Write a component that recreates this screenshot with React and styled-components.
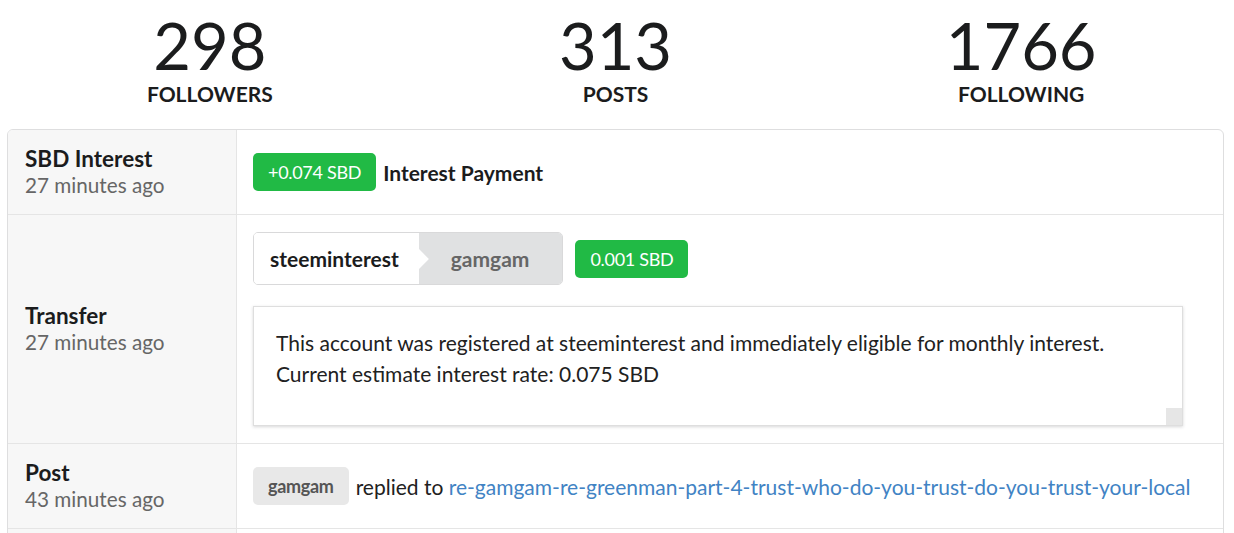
import React from "react";
import styled, { createGlobalStyle } from "styled-components";

const GlobalStyle = createGlobalStyle`
  body {
    margin: 0;
    background: #fff;
    font-family: Lato, "Open Sans", sans-serif;
    color: #212121;
  }
`;

const stats = [
  { value: 298, label: "Followers" },
  { value: 313, label: "Posts" },
  { value: 1766, label: "Following" },
];

const App = () => {
  return (
    <Page>
      <GlobalStyle />
      <Stats>
        {stats.map((s) => (
          <Stat key={s.label}>
            <StatValue>{s.value}</StatValue>
            <StatLabel>{s.label}</StatLabel>
          </Stat>
        ))}
      </Stats>
      <Table>
        <Row>
          <Head>
            <Title>SBD Interest</Title>
            <Meta>27 minutes ago</Meta>
          </Head>
          <Body>
            <Inline>
              <Label $green>+0.074 SBD</Label>
              <Strong>Interest Payment</Strong>
            </Inline>
          </Body>
        </Row>
        <Row>
          <Head>
            <Title>Transfer</Title>
            <Meta>27 minutes ago</Meta>
          </Head>
          <Body>
            <Inline $gap="12px">
              <Steps>
                <Step $from>steeminterest</Step>
                <Step>gamgam</Step>
              </Steps>
              <Label $green>0.001 SBD</Label>
            </Inline>
            <Segment>
              <Memo>
                This account was registered at steeminterest and immediately eligible for monthly interest.
                <br />
                Current estimate interest rate: 0.075 SBD
              </Memo>
              <Corner />
            </Segment>
          </Body>
        </Row>
        <Row>
          <Head>
            <Title>Post</Title>
            <Meta>43 minutes ago</Meta>
          </Head>
          <Body>
            <Inline $gap="7px">
              <Label>gamgam</Label>
              <Text>
                replied to{" "}
                <Link href="#">re-gamgam-re-greenman-part-4-trust-who-do-you-trust-do-you-trust-your-local</Link>
              </Text>
            </Inline>
          </Body>
        </Row>
        <Row>
          <Head />
          <Body />
        </Row>
      </Table>
    </Page>
  );
};

export default App;

const Page = styled.div`
  width: 1217px;
  margin-left: 7px;
`;

const Stats = styled.div`
  display: grid;
  grid-template-columns: repeat(3, 1fr);
  padding: 13px 0 23px;
`;

const Stat = styled.div`
  display: flex;
  flex-direction: column;
  align-items: center;
`;

const StatValue = styled.div`
  font-size: 65px;
  line-height: 1;
  font-weight: 400;
  color: #1b1c1d;
`;

const StatLabel = styled.div`
  font-size: 21px;
  line-height: 25px;
  font-weight: 700;
  text-transform: uppercase;
  color: #1b1c1d;
  margin-top: 3px;
`;

const Table = styled.div`
  border: 1px solid #dededf;
  border-radius: 6px;
  overflow: hidden;
`;

const Row = styled.div`
  display: grid;
  grid-template-columns: 229px 1fr;
  & + & {
    border-top: 1px solid #e5e5e5;
  }
`;

const Head = styled.div`
  background: #f7f7f7;
  border-right: 1px solid #e5e5e5;
  padding: 16px 17px;
  display: flex;
  flex-direction: column;
  justify-content: center;
  min-height: 52px;
`;

const Title = styled.div`
  font-size: 22.5px;
  font-weight: 700;
  line-height: 26px;
  color: #1b1c1d;
`;

const Meta = styled.div`
  font-size: 20.7px;
  line-height: 26px;
  color: #666;
`;

const Body = styled.div`
  padding: 17px 16px;
  display: flex;
  flex-direction: column;
  justify-content: center;
  gap: 21px;
`;

const Inline = styled.div`
  display: flex;
  align-items: center;
  gap: ${(p) => p.$gap || "7px"};
`;

const Label = styled.span`
  display: inline-flex;
  align-items: center;
  height: 38px;
  padding: 0 15px;
  border-radius: 5px;
  font-size: 18px;
  font-weight: ${(p) => (p.$green ? 400 : 700)};
  background: ${(p) => (p.$green ? "#21ba45" : "#e8e8e8")};
  color: ${(p) => (p.$green ? "#fff" : "#555")};
  letter-spacing: -0.3px;
`;

const Strong = styled.span`
  font-size: 21px;
  font-weight: 700;
  color: #1b1c1d;
`;

const Text = styled.span`
  font-size: 21px;
  color: #212121;
`;

const Link = styled.a`
  color: #4183c4;
  text-decoration: none;
`;

const Steps = styled.div`
  display: flex;
  height: 51px;
  border: 1px solid #d9d9da;
  border-radius: 5px;
  overflow: hidden;
`;

const Step = styled.div`
  position: relative;
  display: flex;
  align-items: center;
  font-size: 21px;
  font-weight: 700;
  padding: ${(p) => (p.$from ? "0 20px 0 16px" : "0 33px 0 32px")};
  background: ${(p) => (p.$from ? "#fff" : "#e0e1e2")};
  color: ${(p) => (p.$from ? "#1b1c1d" : "#666")};
  ${(p) =>
    p.$from &&
    `
    &::after {
      content: "";
      position: absolute;
      right: -7px;
      top: 50%;
      width: 14px;
      height: 14px;
      background: #fff;
      transform: translateY(-50%) rotate(45deg);
      z-index: 1;
    }
  `}
`;

const Segment = styled.div`
  width: 928px;
  height: 118px;
  border: 1px solid #dedede;
  box-shadow: 0 1px 3px rgba(34, 36, 38, 0.18);
  display: flex;
  flex-direction: column;
`;

const Memo = styled.div`
  padding: 20px 22px 0;
  font-size: 21px;
  line-height: 31px;
  color: #212121;
`;

const Corner = styled.div`
  margin-top: auto;
  align-self: flex-end;
  width: 16px;
  height: 17px;
  background: #e6e6e6;
`;
